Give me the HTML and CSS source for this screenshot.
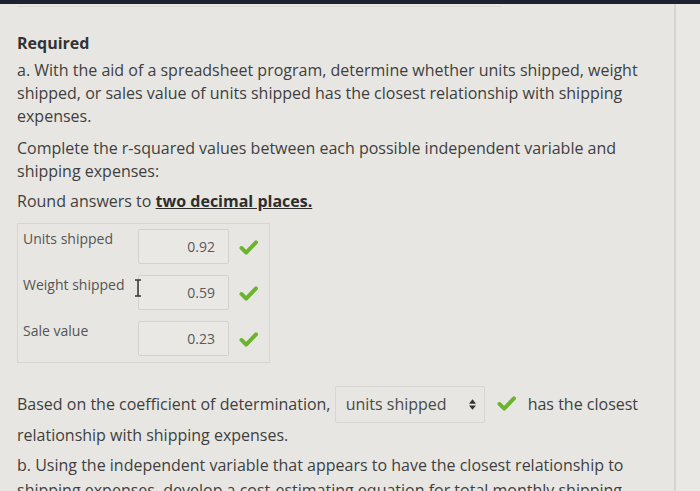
FILE: index.html
```html
<!DOCTYPE html>
<html lang="en">
<head>
  <meta charset="UTF-8">
  <title>Required</title>
  <link rel="stylesheet" href="styles.css">
</head>
<body>
  <div class="topbar"></div>
  <div class="page">
    <div class="content">
      <div class="prevBox"></div>

      <h2 class="required">Required</h2>
      <p class="para">a. With the aid of a spreadsheet program, determine whether units shipped, weight shipped, or sales value of units shipped has the closest relationship with shipping expenses.</p>
      <p class="para">Complete the r-squared values between each possible independent variable and shipping expenses:</p>
      <p class="para round">Round answers to <span class="strong">two decimal places.</span></p>

      <div class="answers">
        <div class="row">
          <label class="rowLabel">Units shipped</label>
          <div class="field">0.92</div>
          <svg class="check" viewBox="0 0 20 16"><path d="M2.5 8.5 L7.5 13.5 L18 2.5" /></svg>
        </div>
        <div class="row">
          <label class="rowLabel">Weight shipped</label>
          <div class="field">0.59</div>
          <svg class="check" viewBox="0 0 20 16"><path d="M2.5 8.5 L7.5 13.5 L18 2.5" /></svg>
          <svg class="ibeam" viewBox="0 0 10 18"><path d="M2 1 H8 M5 1 V17 M2 17 H8" /></svg>
        </div>
        <div class="row">
          <label class="rowLabel">Sale value</label>
          <div class="field">0.23</div>
          <svg class="check" viewBox="0 0 20 16"><path d="M2.5 8.5 L7.5 13.5 L18 2.5" /></svg>
        </div>
      </div>

      <p class="para loose">Based on the coefficient of determination, <span class="select"><span>units shipped</span><svg class="arrows" viewBox="0 0 8 12"><path d="M4 0 L8 5 H0 Z M4 12 L8 7 H0 Z" /></svg></span><svg class="check inline" viewBox="0 0 20 16"><path d="M2.5 8.5 L7.5 13.5 L18 2.5" /></svg>has the closest relationship with shipping expenses.</p>
      <p class="para partB">b. Using the independent variable that appears to have the closest relationship to shipping expenses, develop a cost-estimating equation for total monthly shipping expenses.</p>
    </div>
    <div class="side"></div>
  </div>
</body>
</html>
```

FILE: styles.css
```css
* {
  margin: 0;
  padding: 0;
  box-sizing: border-box;
}

body {
  background: #e7e6e2;
  color: #3f3f3f;
  font-family: 'Open Sans', sans-serif;
  font-size: 16px;
  overflow: hidden;
}

.topbar {
  height: 4px;
  background: #1d2130;
}

.page {
  display: flex;
}

.content {
  width: 676px;
  height: 487px;
  overflow: hidden;
  padding: 0 30px 0 17px;
  border-right: 2px solid #d6d5d1;
}

.side {
  flex: 1;
  background: #e9e8e5;
}

.prevBox {
  width: 484px;
  height: 3px;
  border-bottom: 1px solid #d9d8d4;
}

/*
  question text
*/

.required {
  margin-top: 25px;
  margin-bottom: 4px;
  font-size: 16px;
  font-weight: 700;
  line-height: 23px;
  color: #333;
}

.para {
  line-height: 23px;
  margin-bottom: 9px;
}

/* margins collapse with the paragraph above, so pull it up a little */
.round {
  margin-top: -2px;
  margin-bottom: 10px;
}

.strong {
  font-weight: 700;
  text-decoration: underline;
  color: #2e2e2e;
}

/*
  answer table
*/

.answers {
  width: 253px;
  border: 1px solid #d7d6d2;
  padding: 5px 0 6px 5px;
  margin-bottom: 26px;
  display: flex;
  flex-direction: column;
  gap: 11px;
}

.row {
  display: flex;
  align-items: flex-start;
  position: relative;
}

.rowLabel {
  width: 115px;
  font-size: 14px;
  color: #555;
  line-height: 20px;
}

.field {
  width: 91px;
  height: 35px;
  border: 1px solid #d3d2ce;
  border-radius: 2px;
  background: #e9e8e4;
  font-size: 14px;
  color: #5a5a5a;
  text-align: right;
  padding: 7px 13px 0 0;
}

.check {
  width: 19px;
  height: 15px;
  margin: 11px 0 0 10px;
}

.check path {
  fill: none;
  stroke: #6ab42e;
  stroke-width: 4.2;
  stroke-linecap: round;
  stroke-linejoin: round;
}

.ibeam {
  position: absolute;
  left: 110px;
  top: 4px;
  width: 10px;
  height: 18px;
}

.ibeam path {
  fill: none;
  stroke: #333;
  stroke-width: 1.5;
}

/*
  follow-up sentence
*/

.loose {
  line-height: 31px;
  margin-bottom: 0;
}

.partB {
  line-height: 25px;
  margin-top: 2px;
}

.select {
  display: inline-flex;
  align-items: center;
  justify-content: space-between;
  width: 150px;
  height: 37px;
  margin: -6px 0 -4px 0;
  padding: 0 8px 0 10px;
  border: 1px solid #d7d6d2;
  border-radius: 2px;
  vertical-align: middle;
  color: #4a4a4a;
}

.arrows {
  width: 7px;
  height: 11px;
  fill: #333;
}

.check.inline {
  margin: -4px 12px 0 12px;
  vertical-align: middle;
}
```
